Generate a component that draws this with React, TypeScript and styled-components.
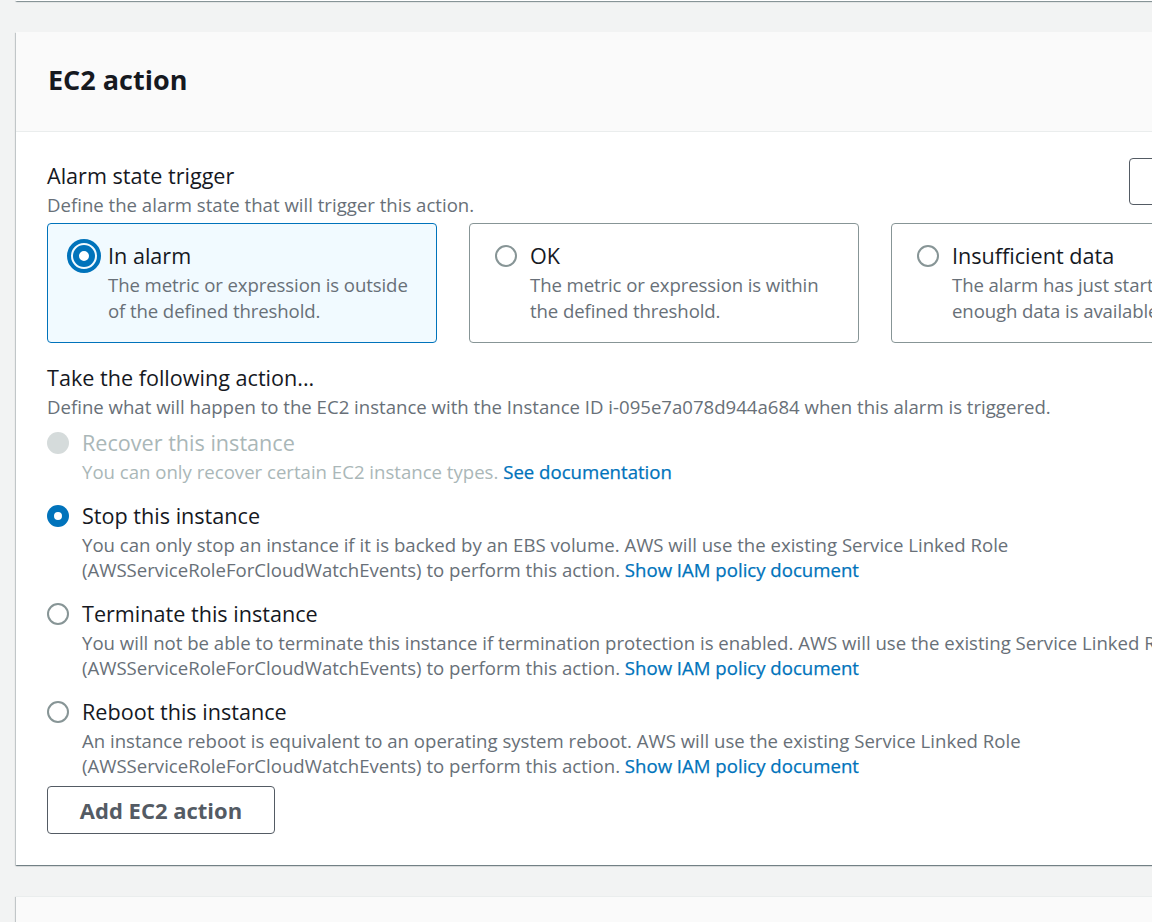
import React from "react";
import styled, { createGlobalStyle, css } from "styled-components";

const GlobalStyle = createGlobalStyle`
  html, body {
    margin: 0;
    padding: 0;
    background: #f2f3f3;
    overflow: hidden;
  }
  body {
    font-family: "Open Sans", Roboto, "Liberation Sans", Arial, sans-serif;
    color: #16191f;
    -webkit-font-smoothing: antialiased;
  }
`;

const Page = styled.div`
  width: 1297px;
  padding-left: 16px;
`;

const PrevCard = styled.div`
  height: 1px;
  background: #ffffff;
  box-shadow: 0 1px 1px 0 rgba(0, 28, 36, 0.35), 1px 1px 1px 0 rgba(0, 28, 36, 0.15),
    -1px 1px 1px 0 rgba(0, 28, 36, 0.15);
`;

const Card = styled.section<{ $muted?: boolean }>`
  margin-top: 31px;
  background: ${(p) => (p.$muted ? "#fafafa" : "#ffffff")};
  box-shadow: 0 1px 1px 0 rgba(0, 28, 36, 0.35), 1px 1px 1px 0 rgba(0, 28, 36, 0.15),
    -1px 1px 1px 0 rgba(0, 28, 36, 0.15);
  ${(p) => p.$muted && css`height: 80px; border-top: 1px solid #eaeded;`}
`;

const CardHeader = styled.header`
  height: 99px;
  display: flex;
  align-items: center;
  padding: 0 32px;
  background: #fafafa;
  border-bottom: 1px solid #eaeded;
`;

const Title = styled.h2`
  margin: 0;
  margin-top: -4px;
  font-size: 27px;
  line-height: 34px;
  font-weight: 700;
  color: #16191f;
`;

const CardBody = styled.div`
  padding: 30px 32px 31px 31px;
`;

const FieldHead = styled.div`
  display: flex;
  justify-content: space-between;
  align-items: flex-start;
`;

const Label = styled.div`
  font-size: 21.6px;
  line-height: 27px;
  color: #16191f;
`;

const Description = styled.div<{ $disabled?: boolean }>`
  margin-top: 3px;
  font-size: 18.6px;
  line-height: 25px;
  color: ${(p) => (p.$disabled ? "#aab7b8" : "#687078")};
`;

const Link = styled.a`
  color: #0073bb;
  font-weight: 500;
  -webkit-text-stroke: 0.25px #0073bb;
  text-decoration: none;
`;

const SideButton = styled.button`
  margin-top: -4px;
  width: 152px;
  height: 47px;
  border: 1px solid #545b64;
  border-radius: 4px;
  background: #ffffff;
  font-family: inherit;
  font-size: 21px;
  font-weight: 700;
  color: #545b64;
`;

const TileGrid = styled.div`
  margin-top: 6px;
  display: grid;
  grid-template-columns: repeat(3, 390px);
  column-gap: 32px;
`;

const Tile = styled.div<{ $selected?: boolean }>`
  display: flex;
  gap: 13px;
  padding: 18px 20px 18px 25px;
  border: 1px solid ${(p) => (p.$selected ? "#0073bb" : "#879596")};
  border-radius: 4px;
  background: ${(p) => (p.$selected ? "#f1faff" : "#ffffff")};
`;

const TileDesc = styled(Description)`
  line-height: 26px;
  letter-spacing: -0.1px;
`;

const Radio = styled.span<{ $checked?: boolean; $disabled?: boolean; $focused?: boolean }>`
  flex: none;
  box-sizing: border-box;
  width: 22px;
  height: 22px;
  margin-top: 2.5px;
  border-radius: 50%;
  background: #ffffff;
  border: 2px solid #879596;
  ${(p) =>
    p.$checked &&
    css`
      border: 7px solid #0073bb;
    `}
  ${(p) =>
    p.$focused &&
    css`
      border-width: 6px;
      outline: 4px solid #0073bb;
      outline-offset: 2px;
    `}
  ${(p) =>
    p.$disabled &&
    css`
      border: none;
      background: #d5dbdb;
    `}
`;

const OptionText = styled.div`
  display: flex;
  flex-direction: column;
`;

const OptionLabel = styled.div<{ $disabled?: boolean }>`
  font-size: 21.6px;
  line-height: 27px;
  color: ${(p) => (p.$disabled ? "#aab7b8" : "#16191f")};
`;

const Section = styled.div`
  margin-top: 21px;
`;

const OptionList = styled.div`
  margin-top: 10px;
  display: flex;
  flex-direction: column;
  gap: 18px;
`;

const Option = styled.div`
  display: flex;
  gap: 13px;
`;

const ActionButton = styled.button`
  margin-top: 8px;
  height: 48px;
  width: 228px;
  padding: 0;
  border: 1px solid #545b64;
  border-radius: 4px;
  background: #ffffff;
  font-family: inherit;
  font-size: 22px;
  font-weight: 700;
  color: #545b64;
`;

const tiles = [
  {
    label: "In alarm",
    desc: ["The metric or expression is outside", "of the defined threshold."],
    selected: true,
  },
  {
    label: "OK",
    desc: ["The metric or expression is within", "the defined threshold."],
  },
  {
    label: "Insufficient data",
    desc: ["The alarm has just started or not", "enough data is available."],
  },
];

const roleLine = "(AWSServiceRoleForCloudWatchEvents) to perform this action. ";

const options = [
  {
    label: "Stop this instance",
    first:
      "You can only stop an instance if it is backed by an EBS volume. AWS will use the existing Service Linked Role",
    checked: true,
  },
  {
    label: "Terminate this instance",
    first:
      "You will not be able to terminate this instance if termination protection is enabled. AWS will use the existing Service Linked Role",
  },
  {
    label: "Reboot this instance",
    first:
      "An instance reboot is equivalent to an operating system reboot. AWS will use the existing Service Linked Role",
  },
];

export default function App() {
  return (
    <>
      <GlobalStyle />
      <Page>
        <PrevCard />
        <Card>
          <CardHeader>
            <Title>EC2 action</Title>
          </CardHeader>
          <CardBody>
            <FieldHead>
              <div>
                <Label>Alarm state trigger</Label>
                <Description>Define the alarm state that will trigger this action.</Description>
              </div>
              <SideButton>Remove</SideButton>
            </FieldHead>
            <TileGrid>
              {tiles.map((t) => (
                <Tile key={t.label} $selected={t.selected}>
                  <Radio $checked={t.selected} $focused={t.selected} />
                  <OptionText>
                    <OptionLabel>{t.label}</OptionLabel>
                    <TileDesc>
                      {t.desc[0]}
                      <br />
                      {t.desc[1]}
                    </TileDesc>
                  </OptionText>
                </Tile>
              ))}
            </TileGrid>
            <Section>
              <Label>Take the following action...</Label>
              <Description>
                Define what will happen to the EC2 instance with the Instance ID i-095e7a078d944a684 when
                this alarm is triggered.
              </Description>
              <OptionList>
                <Option>
                  <Radio $disabled />
                  <OptionText>
                    <OptionLabel $disabled>Recover this instance</OptionLabel>
                    <Description $disabled>
                      You can only recover certain EC2 instance types. <Link href="#">See documentation</Link>
                    </Description>
                  </OptionText>
                </Option>
                {options.map((o) => (
                  <Option key={o.label}>
                    <Radio $checked={o.checked} />
                    <OptionText>
                      <OptionLabel>{o.label}</OptionLabel>
                      <Description>
                        {o.first}
                        <br />
                        {roleLine}
                        <Link href="#">Show IAM policy document</Link>
                      </Description>
                    </OptionText>
                  </Option>
                ))}
              </OptionList>
              <ActionButton>Add EC2 action</ActionButton>
            </Section>
          </CardBody>
        </Card>
        <Card $muted />
      </Page>
    </>
  );
}
